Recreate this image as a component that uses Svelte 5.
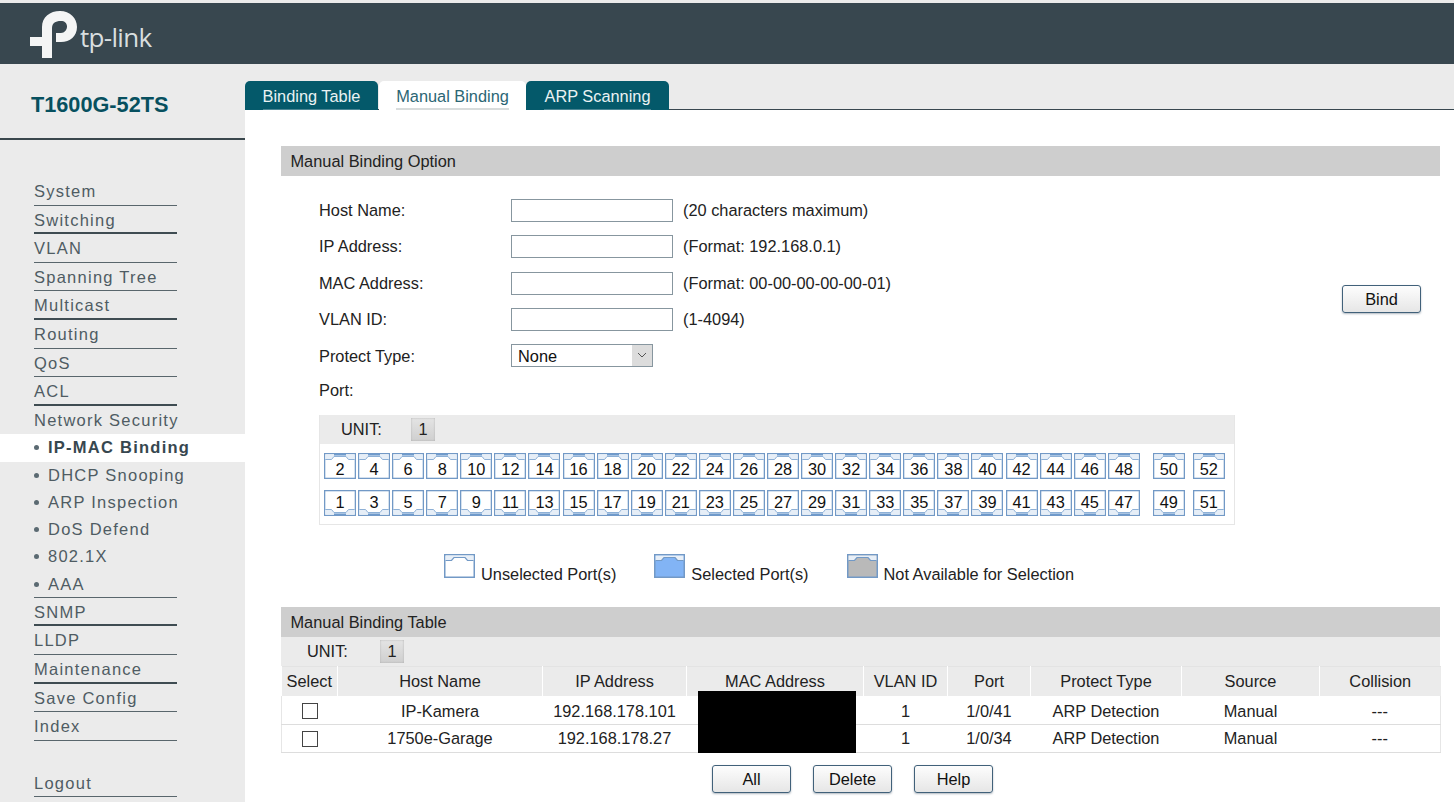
<script>
  const menuA = [
    { t: 'System' }, { t: 'Switching', thick: true }, { t: 'VLAN' }, { t: 'Spanning Tree' },
    { t: 'Multicast', thick: true }, { t: 'Routing' }, { t: 'QoS' }, { t: 'ACL', thick: true }
  ];
  const sub = ['DHCP Snooping', 'ARP Inspection', 'DoS Defend', '802.1X'];
  const menuB = [
    { t: 'SNMP', thick: true }, { t: 'LLDP' }, { t: 'Maintenance', thick: true }, { t: 'Save Config' }, { t: 'Index' }
  ];
  const evens = Array.from({ length: 24 }, (_, i) => (i + 1) * 2);
  const odds = evens.map((n) => n - 1);
  const fields = [
    { label: 'Host Name:', hint: '(20 characters maximum)' },
    { label: 'IP Address:', hint: '(Format: 192.168.0.1)' },
    { label: 'MAC Address:', hint: '(Format: 00-00-00-00-00-01)' },
    { label: 'VLAN ID:', hint: '(1-4094)' }
  ];
  const cols = ['Select', 'Host Name', 'IP Address', 'MAC Address', 'VLAN ID', 'Port', 'Protect Type', 'Source', 'Collision'];
  const rows = [
    ['IP-Kamera', '192.168.178.101', '', '1', '1/0/41', 'ARP Detection', 'Manual', '---'],
    ['1750e-Garage', '192.168.178.27', '', '1', '1/0/34', 'ARP Detection', 'Manual', '---']
  ];
</script>

{#snippet port(n, flip)}
  <div class="port" class:flip>
    <svg class="port-art" viewBox="0 0 32 26" width="32" height="26" aria-hidden="true">
      <rect x="0.65" y="0.65" width="30.7" height="24.7" fill="#fff" stroke="#7299c6" stroke-width="1.3" />
      <path d="M1.3 1.3H30.7V6.5H24.5L22 3.5H10L7.5 6.5H1.3Z" fill="#e6eef7" />
      <path d="M1.3 6.5H7.5L10 3.5H22L24.5 6.5H30.7" fill="none" stroke="#8db0d6" stroke-width="1" />
      <path d="M10 1.6H22" stroke="#6f9bcc" stroke-width="1.8" />
    </svg>
    <span class="num">{n}</span>
  </div>
{/snippet}

{#snippet legendIcon(fill)}
  <svg viewBox="0 0 31 24" width="31" height="24" aria-hidden="true">
    <rect x="0.75" y="0.75" width="29.5" height="22.5" fill={fill} stroke="#7299c6" stroke-width="1.5" />
    <path d="M1.5 1.5H29.5V6.5H23.5L21 3.5H10L7.5 6.5H1.5Z" fill="#e8eff7" />
    <path d="M1.5 6.5H7.5L10 3.5H21L23.5 6.5H29.5" fill="none" stroke="#7299c6" stroke-width="1.2" />
  </svg>
{/snippet}

{#snippet unit()}
  <span class="unit-label">UNIT:</span><span class="unit-box">1</span>
{/snippet}

<div class="page">
  <header class="top">
    <svg class="logo" viewBox="0 0 47 47" width="47" height="47" aria-hidden="true">
      <path fill="#f4f5f5" d="M12 47V16C12 6 20 0 30 0C40 0 47 7 47 16C47 25 40 31 31 31H26V22H31C34.5 22 37 19 37 15.5C37 12 34.5 10 31 10C25 10 22 12.5 22 17V47ZM0 26H12V35H0Z" />
    </svg>
    <span class="brand">tp-link</span>
  </header>

  <div class="body">
    <aside class="side">
      <div class="model">T1600G-52TS</div>
      <nav class="menu">
        {#each menuA as m}
          <div class="item" class:thick={m.thick}>{m.t}</div>
        {/each}
        <div class="item plain">Network Security</div>
        <div class="subitem active"><i></i>IP-MAC Binding</div>
        {#each sub as s}
          <div class="subitem"><i></i>{s}</div>
        {/each}
        <div class="subitem last"><i></i>AAA</div>
        {#each menuB as m}
          <div class="item" class:thick={m.thick}>{m.t}</div>
        {/each}
        <div class="item logout">Logout</div>
      </nav>
    </aside>

    <main class="main">
      <div class="tabs">
        <div class="tab"><span>Binding Table</span></div>
        <div class="tab current"><span>Manual Binding</span></div>
        <div class="tab"><span>ARP Scanning</span></div>
      </div>

      <div class="content">
        <section class="section option">
          <h2 class="bar">Manual Binding Option</h2>
          <div class="option-body">
            <div class="fields">
              {#each fields as f}
                <div class="row">
                  <label class="lab" for={f.label}>{f.label}</label>
                  <input id={f.label} class="text" type="text" />
                  <span class="hint">{f.hint}</span>
                </div>
              {/each}
              <div class="row">
                <span class="lab">Protect Type:</span>
                <div class="select">
                  <span class="sel-val">None</span>
                  <span class="sel-btn">
                    <svg viewBox="0 0 10 6" width="10" height="6" aria-hidden="true"><path d="M1 1L5 5L9 1" fill="none" stroke="#555" stroke-width="1" /></svg>
                  </span>
                </div>
              </div>
              <div class="row port-row"><span class="lab">Port:</span></div>

              <div class="panel">
                <div class="unit-row panel-unit">{@render unit()}</div>
                <div class="ports">
                  <div class="pcol">
                    <div class="prow">{#each evens as n}{@render port(n, false)}{/each}</div>
                    <div class="prow">{#each odds as n}{@render port(n, true)}{/each}</div>
                  </div>
                  <div class="pcol sfp">
                    <div class="prow">{@render port(50, false)}{@render port(52, false)}</div>
                    <div class="prow">{@render port(49, true)}{@render port(51, true)}</div>
                  </div>
                </div>
              </div>
            </div>
            <button class="btn bind" type="button">Bind</button>
          </div>
          <div class="legend">
            <div class="leg">{@render legendIcon('#fff')}<span>Unselected Port(s)</span></div>
            <div class="leg">{@render legendIcon('#82b4f5')}<span>Selected Port(s)</span></div>
            <div class="leg">{@render legendIcon('#b9b9b9')}<span>Not Available for Selection</span></div>
          </div>
        </section>

        <section class="section">
          <h2 class="bar">Manual Binding Table</h2>
          <div class="unit-row table-unit">{@render unit()}</div>
          <div class="table-wrap">
            <table>
              <colgroup>
                <col class="c0" /><col class="c1" /><col class="c2" /><col class="c3" /><col class="c4" /><col class="c5" /><col class="c6" /><col class="c7" /><col class="c8" />
              </colgroup>
              <thead>
                <tr>{#each cols as c}<th>{c}</th>{/each}</tr>
              </thead>
              <tbody>
                {#each rows as r}
                  <tr>
                    <td><input class="check" type="checkbox" aria-label="Select" /></td>
                    {#each r as v}<td>{v}</td>{/each}
                  </tr>
                {/each}
              </tbody>
            </table>
            <div class="redact"></div>
          </div>
          <div class="actions">
            <button class="btn" type="button">All</button>
            <button class="btn" type="button">Delete</button>
            <button class="btn" type="button">Help</button>
          </div>
        </section>
      </div>
    </main>
  </div>
</div>

<style>
  :global(body) {
    margin: 0;
    background: #ebebeb;
  }
  .page {
    width: 1454px;
    height: 802px;
    overflow: hidden;
    padding-top: 3px;
    box-sizing: border-box;
    font-family: "Liberation Sans", Arial, sans-serif;
    font-size: 16.35px;
    color: #222;
    display: flex;
    flex-direction: column;
  }
  .top {
    flex: 0 0 61px;
    background: #38474f;
    display: flex;
    align-items: flex-start;
    position: relative;
  }
  .logo {
    margin: 8px 0 0 30px;
  }
  .brand {
    margin: 16px 0 0 3px;
    font-family: "Open Sans", sans-serif;
    font-size: 26px;
    line-height: 36px;
    font-weight: 500;
    letter-spacing: -0.7px;
    color: #d9dedf;
  }
  .body {
    flex: 1;
    display: flex;
    min-height: 0;
  }
  .side {
    flex: 0 0 245px;
    background: #ebebeb;
  }
  .model {
    height: 76px;
    box-sizing: border-box;
    border-bottom: 2px solid #3a474d;
    padding: 26px 0 0 31px;
    font-size: 21.7px;
    line-height: 30px;
    font-weight: 700;
    color: #07505f;
  }
  .menu {
    padding-top: 37px;
    font-size: 16.5px;
  }
  .item {
    margin-left: 34px;
    width: 143px;
    height: 28.6px;
    box-sizing: border-box;
    border-bottom: 1px solid #59666c;
    line-height: 28.5px;
    white-space: nowrap;
    color: #4f5c63;
    letter-spacing: 1.25px;
  }
  .item.thick {
    border-bottom: 2px solid #3f4c52;
  }
  .item.plain {
    border-bottom: 0;
  }
  .item.logout {
    margin-top: 28px;
  }
  .subitem {
    height: 27.2px;
    line-height: 27px;
    padding-left: 34px;
    display: flex;
    align-items: center;
    color: #4f5c63;
    letter-spacing: 1.25px;
    white-space: nowrap;
  }
  .subitem i {
    width: 5px;
    height: 5px;
    border-radius: 50%;
    background: #5b6a72;
    margin-right: 9px;
    flex: none;
  }
  .subitem.active {
    background: #fff;
    font-weight: 700;
    color: #37474f;
  }
  .subitem.last {
    position: relative;
    height: 27.6px;
  }
  .subitem.last::after {
    content: "";
    position: absolute;
    left: 34px;
    bottom: 0;
    width: 143px;
    border-bottom: 1px solid #59666c;
  }
  .main {
    flex: 1;
    display: flex;
    flex-direction: column;
    min-width: 0;
  }
  .tabs {
    height: 46px;
    box-sizing: border-box;
    display: flex;
    align-items: flex-end;
    border-bottom: 1px solid #38474f;
    background: #ebebeb;
  }
  .tab {
    height: 29px;
    margin-bottom: -1px;
    box-sizing: border-box;
    padding: 0 18px;
    width: 133px;
    text-align: center;
    background: #04596a;
    color: #eaf2f3;
    border-radius: 5px 5px 0 0;
    line-height: 30px;
    display: flex;
    justify-content: center;
  }
  .tab span {
    display: block;
    height: 29px;
    box-sizing: border-box;
    border-bottom: 1px solid #4b8694;
    white-space: nowrap;
  }
  .tab.current {
    width: 147px;
    margin-left: 1px;
    background: #fff;
    color: #2b6674;
  }
  .tab.current span {
    border-bottom: 2px solid #d8dcdc;
  }
  .tab:last-child {
    width: 143px;
  }
  .content {
    flex: 1;
    background: #fff;
    padding: 36px 14px 0 36px;
  }
  .bar {
    margin: 0;
    height: 30px;
    line-height: 30px;
    padding-left: 9.5px;
    background: #cecece;
    font-size: inherit;
    font-weight: 400;
    color: #222;
  }
  .option-body {
    display: flex;
    align-items: flex-start;
    padding: 16px 19px 0 38px;
  }
  .fields {
    width: 916px;
  }
  .row {
    height: 36.5px;
    display: flex;
    align-items: center;
  }
  .row.port-row {
    height: 31px;
    margin-bottom: 9px;
  }
  .lab {
    width: 192px;
    flex: none;
  }
  .text {
    width: 162px;
    height: 23px;
    box-sizing: border-box;
    border: 1px solid #87969f;
    background: #fff;
    margin: 0 10px 0 0;
    padding: 0;
  }
  .select {
    width: 142px;
    height: 23px;
    margin-bottom: 2px;
    box-sizing: border-box;
    border: 1px solid #87969f;
    display: flex;
    justify-content: space-between;
  }
  .sel-val {
    padding-left: 6px;
    line-height: 22px;
    color: #111;
  }
  .sel-btn {
    width: 20px;
    background: #dcdcdc;
    display: flex;
    align-items: center;
    justify-content: center;
  }
  .panel {
    width: 916px;
    box-sizing: border-box;
    border: 1px solid #e6e6e6;
    border-top: 0;
  }
  .unit-row {
    display: flex;
    align-items: center;
    background: #ebebeb;
  }
  .panel-unit {
    height: 29px;
    padding-left: 21px;
  }
  .unit-label {
    width: 70px;
    flex: none;
    color: #222;
  }
  .unit-box {
    width: 24px;
    height: 23px;
    line-height: 23px;
    text-align: center;
    background: linear-gradient(#e4e4e4, #cfcfcf);
    box-shadow: inset 0 0 2px #aaa;
    color: #222;
  }
  .ports {
    display: flex;
    padding: 9px 0 8px 4px;
  }
  .pcol {
    display: flex;
    flex-direction: column;
    gap: 11px;
  }
  .pcol.sfp {
    margin-left: 13px;
  }
  .prow {
    display: flex;
    gap: 2.09px;
  }
  .sfp .prow {
    gap: 8px;
  }
  .port {
    width: 32px;
    height: 26px;
    position: relative;
    text-align: center;
    line-height: 32px;
    color: #111;
  }
  .port.flip {
    line-height: 24px;
  }
  .port-art {
    position: absolute;
    left: 0;
    top: 0;
  }
  .port.flip .port-art {
    transform: scaleY(-1);
  }
  .num {
    position: relative;
  }
  .bind {
    margin: 93px 0 0 auto;
  }
  .btn {
    width: 79px;
    height: 28px;
    box-sizing: border-box;
    border: 1px solid #41617a;
    border-radius: 3px;
    background: linear-gradient(#fdfdfd, #e6e6e6);
    box-shadow: 0 1px 2px rgba(60, 80, 100, 0.4);
    font: inherit;
    color: #111;
    padding: 1px 0 0;
  }
  .legend {
    display: flex;
    gap: 38px;
    padding: 29px 0 0 163px;
    height: 53px;
    box-sizing: content-box;
  }
  .leg {
    display: flex;
    gap: 6px;
    align-items: flex-start;
    height: 24px;
  }
  .leg span {
    margin-top: 10px;
    line-height: 20px;
    white-space: nowrap;
  }
  .table-unit {
    height: 29px;
    padding-left: 26px;
  }
  .table-unit .unit-label {
    width: 73px;
  }
  .table-wrap {
    position: relative;
  }
  table {
    width: 1159px;
    border-collapse: collapse;
    table-layout: fixed;
  }
  .c0 { width: 56px; }
  .c1 { width: 205px; }
  .c2 { width: 144px; }
  .c3 { width: 177px; }
  .c4 { width: 84px; }
  .c5 { width: 83px; }
  .c6 { width: 151px; }
  .c7 { width: 138px; }
  .c8 { width: 121px; }
  th {
    height: 29px;
    padding: 0;
    background: #ebebeb;
    font-weight: 400;
    border-right: 1px solid #fff;
    border-top: 1px solid #e3e3e3;
    color: #222;
  }
  th:last-child {
    border-right: 0;
  }
  td {
    height: 26px;
    padding: 1px 0 0;
    text-align: center;
    border-bottom: 1px solid #dddddd;
    color: #222;
  }
  tbody tr:first-child td {
    height: 25px;
    padding-top: 3px;
  }
  tr td:first-child {
    border-left: 1px solid #e6e6e6;
  }
  tr td:last-child {
    border-right: 1px solid #e6e6e6;
  }
  .check {
    appearance: none;
    display: block;
    width: 16px;
    height: 16px;
    margin: 0 auto;
    box-sizing: border-box;
    border: 1px solid #444;
    background: #fff;
  }
  .redact {
    position: absolute;
    left: 417px;
    width: 158px;
    top: 25px;
    height: 62px;
    background: #000;
  }
  .actions {
    display: flex;
    gap: 22px;
    padding: 12px 0 0 431px;
  }
</style>
